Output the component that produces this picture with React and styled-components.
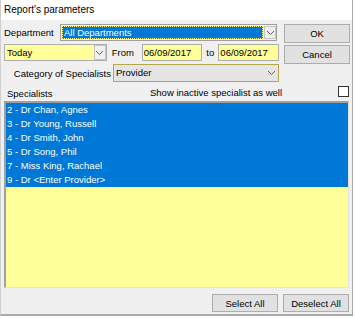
import React from 'react'
import styled, { createGlobalStyle } from 'styled-components';

const specialists = [
  '2 - Dr Chan, Agnes',
  '3 - Dr Young, Russell',
  '4 - Dr Smith, John',
  '5 - Dr Song, Phil',
  '7 - Miss King, Rachael',
  '9 - Dr <Enter Provider>',
];

const Chevron = () => (
  <svg width="9" height="6" viewBox="0 0 9 6">
    <path d="M1 1 L4.5 4.5 L8 1" fill="none" stroke="#606060" strokeWidth="1" />
  </svg>
);

const App = () => {
  return (
    <>
      <Global />
      <Dialog>
        <TitleBar>Report's parameters</TitleBar>
        <Body>
          <Top>
            <Fields>
              <Row>
                <Label width={56}>Department</Label>
                <Select width={217}>
                  <Selected>All Departments</Selected>
                  <ArrowBox><Chevron /></ArrowBox>
                </Select>
              </Row>
              <Row>
                <Combo width={105}>
                  <ComboText>Today</ComboText>
                  <ArrowBox><Chevron /></ArrowBox>
                </Combo>
                <Label gap={5} width={30}>From</Label>
                <DateInput>06/09/2017</DateInput>
                <Label gap={4} width={12}>to</Label>
                <DateInput>06/09/2017</DateInput>
              </Row>
              <Row tall>
                <Label width={109} right>Category of Specialists</Label>
                <CategoryCombo>
                  <ComboText>Provider</ComboText>
                  <PlainArrow><Chevron /></PlainArrow>
                </CategoryCombo>
              </Row>
            </Fields>
            <Buttons>
              <Button>OK</Button>
              <Button>Cancel</Button>
            </Buttons>
          </Top>
          <ListHeader>
            <HeaderLabel>Specialists</HeaderLabel>
            <Inactive>Show inactive specialist as well</Inactive>
            <Checkbox />
          </ListHeader>
          <List>
            {specialists.map((s) => (
              <Item key={s}>{s}</Item>
            ))}
          </List>
          <Footer>
            <Button>Select All</Button>
            <Button>Deselect All</Button>
          </Footer>
        </Body>
      </Dialog>
    </>
  )
};

// Styled Comps
const Global = createGlobalStyle`
  body {
    margin: 0;
    background: #ffffff;
    font-family: "Liberation Sans", Arial, sans-serif;
    font-size: 9.5px;
    color: #000;
  }
`;
const Dialog = styled.div`
  width: 353px;
  height: 316px;
  box-sizing: border-box;
  border-left: 1px solid #cfcfcf;
  border-right: 1px solid #a8a8a8;
  border-bottom: 2px solid #aaaaaa;
  display: flex;
  flex-direction: column;
  background: #f0f0f0;
`;
const TitleBar = styled.div`
  height: 20px;
  background: #ffffff;
  font-size: 10px;
  padding-left: 3px;
  line-height: 20px;
  box-sizing: border-box;
`;
const Body = styled.div`
  flex: 1;
  padding: 4px 3px 0 3px;
  display: flex;
  flex-direction: column;
`;
const Top = styled.div`
  display: flex;
`;
const Fields = styled.div`
  width: 275px;
  display: flex;
  flex-direction: column;
  gap: 3px;
`;
const Row = styled.div`
  display: flex;
  align-items: center;
  height: ${(p) => (p.tall ? 18 : 17)}px;
`;
const Label = styled.span`
  width: ${(p) => p.width}px;
  margin-left: ${(p) => p.gap || 0}px;
  flex-shrink: 0;
  white-space: nowrap;
  text-align: ${(p) => (p.right ? 'right' : 'left')};
  padding-right: ${(p) => (p.right ? 2 : 0)}px;
  box-sizing: border-box;
`;
const Select = styled.div`
  width: ${(p) => p.width}px;
  height: 17px;
  box-sizing: border-box;
  border: 1px solid #a0a0a0;
  background: #ffff99;
  display: flex;
  padding: 1px 0 1px 1px;
`;
const Selected = styled.div`
  flex: 1;
  background: #0078d7;
  color: #ffffff;
  line-height: 13px;
  padding-left: 2px;
  outline: 1px dotted #ffff99;
  outline-offset: -1px;
`;
const ArrowBox = styled.div`
  width: 12px;
  margin-left: 1px;
  box-sizing: border-box;
  border: 1px solid #c4c4c4;
  background: #f0f0f0;
  display: flex;
  align-items: center;
  justify-content: center;
`;
const Combo = styled.div`
  width: ${(p) => p.width}px;
  height: 17px;
  box-sizing: border-box;
  border: 1px solid #adadad;
  background: #ffff99;
  display: flex;
`;
const ComboText = styled.div`
  flex: 1;
  line-height: 15px;
  padding-left: 2px;
`;
const CategoryCombo = styled.div`
  width: 166px;
  height: 18px;
  box-sizing: border-box;
  border: 1px solid #b5a848;
  background: #e5e5e5;
  display: flex;
`;
const PlainArrow = styled.div`
  width: 14px;
  display: flex;
  align-items: center;
  justify-content: center;
`;
const DateInput = styled.div`
  width: 62px;
  height: 17px;
  box-sizing: border-box;
  border: 1px solid #adadad;
  background: #ffff99;
  line-height: 15px;
  padding-left: 1px;
`;
const Buttons = styled.div`
  margin-left: 5px;
  display: flex;
  flex-direction: column;
  gap: 2px;
`;
const Button = styled.div`
  width: 66px;
  height: 19px;
  box-sizing: border-box;
  border: 1px solid #adadad;
  background: #e1e1e1;
  display: flex;
  align-items: center;
  justify-content: center;
`;
const ListHeader = styled.div`
  display: flex;
  align-items: center;
  height: 15px;
  margin-top: 3px;
  padding-bottom: 1px;
`;
const HeaderLabel = styled.span`
  padding-left: 3px;
  padding-top: 2px;
  width: 143px;
`;
const Inactive = styled.span`
  flex: 1;
`;
const Checkbox = styled.div`
  width: 11px;
  height: 11px;
  box-sizing: border-box;
  border: 1px solid #333333;
  background: #ffffff;
  margin-bottom: 2px;
`;
const List = styled.div`
  height: 187px;
  box-sizing: border-box;
  border-top: 2px solid #a0a0a0;
  border-left: 2px solid #a0a0a0;
  border-right: 1px solid #e3e3e3;
  border-bottom: 1px solid #e3e3e3;
  background: #ffff99;
  display: flex;
  flex-direction: column;
`;
const Item = styled.div`
  height: 14px;
  line-height: 14px;
  background: #0078d7;
  color: #ffffff;
  padding-left: 1px;
`;
const Footer = styled.div`
  display: flex;
  justify-content: flex-end;
  gap: 5px;
  margin-top: 6px;

  & > div {
    height: 18px;
  }
`;

export default App;
